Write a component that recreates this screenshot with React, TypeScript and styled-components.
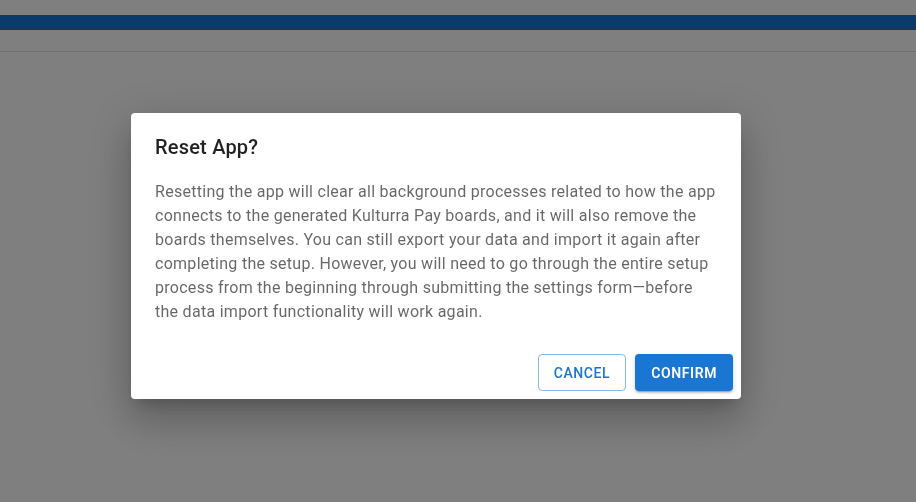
import React from 'react'
import styled, { createGlobalStyle } from 'styled-components'

const GlobalStyle = createGlobalStyle`
  * { box-sizing: border-box; }
  html, body {
    margin: 0;
    padding: 0;
    width: 100%;
    height: 100%;
    overflow: hidden;
    font-family: Roboto, 'Noto Sans', sans-serif;
    background: #ffffff;
  }
`

const Page = styled.div`
  width: 100%;
  height: 100vh;
  display: flex;
  flex-direction: column;
  background: #ffffff;
`

const TopGap = styled.div`
  height: 15px;
`

const AppBar = styled.header`
  height: 15px;
  background: #1674d6;
  border-top: 1px solid #5c6670;
  border-bottom: 1px solid #5c6670;
`

const SubBar = styled.div`
  height: 22px;
  border-bottom: 1px solid #e3e3e3;
`

const Backdrop = styled.div`
  position: fixed;
  inset: 0;
  background: rgba(0, 0, 0, 0.5);
  display: flex;
  align-items: flex-start;
  padding: 113px 0 0 131px;
`

const Dialog = styled.div`
  width: 610px;
  background: #ffffff;
  border-radius: 4px;
  box-shadow: 0px 11px 15px -7px rgba(0, 0, 0, 0.2),
    0px 24px 38px 3px rgba(0, 0, 0, 0.14),
    0px 9px 46px 8px rgba(0, 0, 0, 0.12);
  display: flex;
  flex-direction: column;
`

const Title = styled.h2`
  margin: 0;
  padding: 18px 24px 0;
  font-size: 20px;
  font-weight: 500;
  line-height: 32px;
  letter-spacing: 0.2px;
  color: rgba(0, 0, 0, 0.87);
`

const Content = styled.div`
  padding: 17px 24px 22px;
`

const Text = styled.p`
  margin: 0;
  font-size: 16px;
  line-height: 24px;
  letter-spacing: 0.28px;
  color: rgba(0, 0, 0, 0.6);
`

const Actions = styled.div`
  display: flex;
  justify-content: flex-end;
  align-items: center;
  gap: 9px;
  padding: 8px;
`

const Button = styled.button<{ $variant: 'outlined' | 'contained' }>`
  height: 37px;
  min-width: 64px;
  border-radius: 4px;
  font-family: Roboto, 'Noto Sans', sans-serif;
  font-size: 14px;
  font-weight: 500;
  letter-spacing: 0.6px;
  text-transform: uppercase;
  cursor: pointer;
  ${({ $variant }) =>
    $variant === 'outlined'
      ? `
    padding: 0 15px;
    background: transparent;
    color: #1976d2;
    border: 1px solid rgba(25, 118, 210, 0.5);
  `
      : `
    padding: 0 16px;
    background: #1976d2;
    color: #ffffff;
    font-weight: 600;
    border: none;
    box-shadow: 0px 3px 1px -2px rgba(0, 0, 0, 0.2),
      0px 2px 2px 0px rgba(0, 0, 0, 0.14),
      0px 1px 5px 0px rgba(0, 0, 0, 0.12);
  `}
`

export default function App() {
  return (
    <>
      <GlobalStyle />
      <Page>
        <TopGap />
        <AppBar />
        <SubBar />
      </Page>
      <Backdrop>
        <Dialog role="dialog">
          <Title>Reset App?</Title>
          <Content>
            <Text>
              Resetting the app will clear all background processes related to how the app
              connects to the generated Kulturra Pay boards, and it will also remove the
              boards themselves. You can still export your data and import it again after
              completing the setup. However, you will need to go through the entire setup
              process from the beginning through submitting the settings form—before the
              data import functionality will work again.
            </Text>
          </Content>
          <Actions>
            <Button $variant="outlined">Cancel</Button>
            <Button $variant="contained">Confirm</Button>
          </Actions>
        </Dialog>
      </Backdrop>
    </>
  )
}
